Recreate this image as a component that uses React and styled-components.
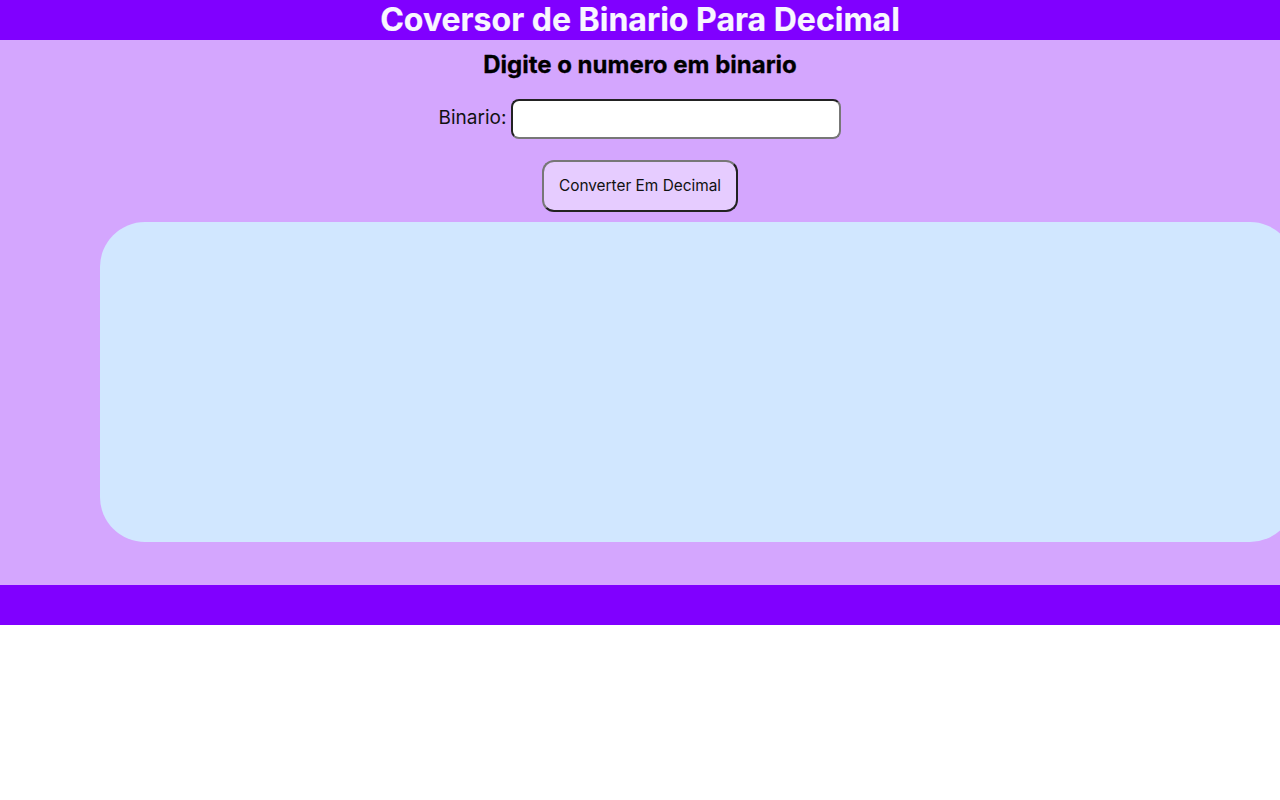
import React, { useState } from "react";
import styled, { createGlobalStyle } from "styled-components";

const GlobalStyle = createGlobalStyle`
  body {
    margin: 0;
    font-family: Inter, "Noto Sans", sans-serif;
    background: #fff;
    overflow-x: hidden;
  }
`;

const App = () => {
  const [binario, setBinario] = useState("");
  const [resultado, setResultado] = useState("");

  const converter = () => {
    if (/^[01]+$/.test(binario)) {
      setResultado(parseInt(binario, 2).toString());
    } else {
      setResultado("");
    }
  };

  return (
    <>
      <GlobalStyle />
      <Header>
        <h1>Coversor de Binario Para Decimal</h1>
      </Header>
      <Main>
        <h2>Digite o numero em binario</h2>
        <Row>
          <label htmlFor="binario">Binario:</label>
          <Input
            id="binario"
            type="text"
            value={binario}
            onChange={(e) => setBinario(e.target.value)}
          />
        </Row>
        <Button onClick={converter}>Converter Em Decimal</Button>
        <Resultado>{resultado}</Resultado>
      </Main>
      <Footer />
    </>
  );
};

export default App;

const Header = styled.header`
  height: 40px;
  background: #8000ff;
  display: flex;
  justify-content: center;
  align-items: center;
  h1 {
    margin: 0;
    font-size: 32px;
    font-weight: 700;
    line-height: 40px;
    color: #f8f6ff;
    -webkit-text-stroke: 0.2px #f8f6ff;
  }
`;
const Main = styled.main`
  background: #d4a6fe;
  padding: 10px 0 43px;
  display: flex;
  flex-direction: column;
  align-items: center;
  h2 {
    margin: 0;
    font-size: 24px;
    font-weight: 700;
    line-height: 29px;
    color: #000;
    -webkit-text-stroke: 0.3px #000;
  }
`;
const Row = styled.div`
  margin-top: 20px;
  height: 40px;
  display: flex;
  align-items: center;
  gap: 5px;
  label {
    font-size: 19px;
    color: #111;
    padding-bottom: 3px;
  }
`;
const Input = styled.input`
  width: 330px;
  height: 40px;
  box-sizing: border-box;
  border: 2px solid;
  border-color: #222 #777 #777 #222;
  border-radius: 8px;
  background: #fff;
  font-size: 16px;
  padding: 0 8px;
  outline: none;
`;
const Button = styled.button`
  margin-top: 21px;
  width: 196px;
  height: 52px;
  box-sizing: border-box;
  background: #e6ccff;
  border: 2px solid;
  border-color: #777 #222 #222 #777;
  border-radius: 12px;
  font-family: Inter, "Noto Sans", sans-serif;
  font-size: 15.4px;
  color: #111;
  cursor: pointer;
  padding-bottom: 3px;
`;
const Resultado = styled.div`
  align-self: flex-start;
  margin-top: 10px;
  margin-left: 100px;
  width: calc(100% - 85px);
  height: 320px;
  background: #d1e7ff;
  border-radius: 45px;
  display: flex;
  justify-content: center;
  align-items: center;
  font-size: 32px;
`;
const Footer = styled.footer`
  height: 40px;
  background: #8000ff;
`;
